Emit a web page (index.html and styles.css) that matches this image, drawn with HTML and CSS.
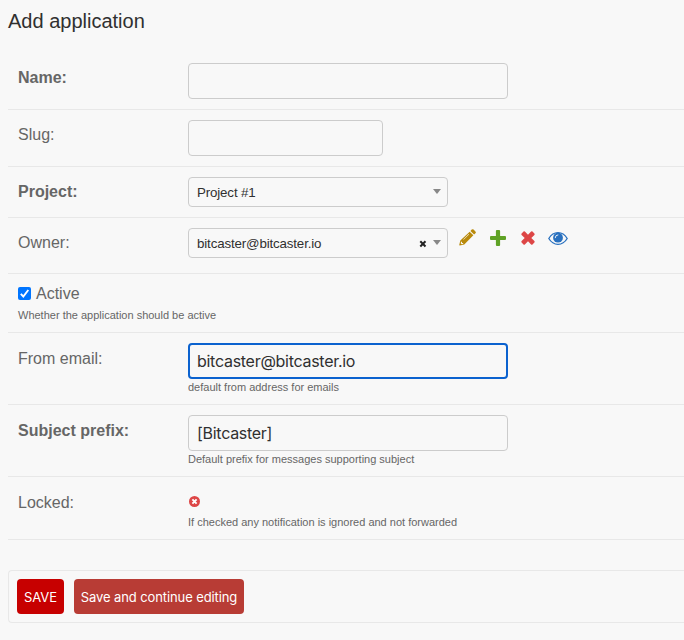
FILE: index.html
```html
<!DOCTYPE html>
<html lang="en">
<head>
<meta charset="utf-8">
<title>Add application</title>
<link rel="stylesheet" href="styles.css">
</head>
<body>
<main class="content">
  <h1 class="title">Add application</h1>
  <form>
    <div class="row">
      <label class="label required">Name:</label>
      <div class="field"><div class="input"></div></div>
    </div>
    <div class="row">
      <label class="label">Slug:</label>
      <div class="field"><div class="input input-short"></div></div>
    </div>
    <div class="row row-project">
      <label class="label required">Project:</label>
      <div class="field"><div class="select"><span class="value value-project">Project #1</span><i class="caret"></i></div></div>
    </div>
    <div class="row row-owner">
      <label class="label">Owner:</label>
      <div class="field related">
        <div class="select"><span class="value value-owner">bitcaster@bitcaster.io</span><svg class="clear" viewBox="0 0 8 8"><path d="M1.3 1.3l5.2 5.2M6.5 1.3L1.3 6.5" stroke="#222" stroke-width="2"/></svg><i class="caret"></i></div>
        <div class="icons">
          <svg class="icon icon-pencil" viewBox="0 0 18 18"><g fill="#b98a0b"><path d="M12.100 2l1.400-1.400q.9-.9 1.900 0l2 2q.9 1 0 1.900L16 5.900z"/><path fill-rule="evenodd" d="M11.300 2.800l3.900 3.900L5.600 16.300.9 17.400q-.7.100-.6-.6l1.100-4.700zM10.200 5.400L4.500 11.100l.4.400 5.700-5.700zM2.200 13.600l-.4 1.500 1.100 1.100 1.500-.4v-1H3.200v-1.200z"/></g></svg>
          <svg class="icon icon-plus" viewBox="0 0 16 16"><path fill="#5fa225" d="M5.900 1q0-1 1-1h2.200q1 0 1 1v4.900H15q1 0 1 1v2.200q0 1-1 1h-4.900V15q0 1-1 1H6.900q-1 0-1-1v-4.900H1q-1 0-1-1V6.900q0-1 1-1h4.900z"/></svg>
          <svg class="icon icon-times" viewBox="0 0 14 14"><path fill="#dd4646" d="M.6 2.500L2.500.6q.7-.6 1.400 0L7 3.700 10.100.6q.7-.6 1.400 0l1.900 1.900q.6.7 0 1.400L10.300 7l3.100 3.100q.6.7 0 1.400l-1.900 1.900q-.7.6-1.400 0L7 10.300l-3.100 3.100q-.7.6-1.400 0L.6 11.500q-.6-.7 0-1.400L3.700 7 .6 3.900q-.6-.7 0-1.400z"/></svg>
          <svg class="icon icon-eye" viewBox="0 0 20 13"><path d="M.8 6.500Q4.300.7 10 .7t9.200 5.800Q15.700 12.300 10 12.300T.8 6.500z" fill="none" stroke="#2870bf" stroke-width="1.300"/><circle cx="10" cy="5.700" r="4.900" fill="#2870bf"/><path d="M7.200 5.700Q7.200 3 9.900 2.900" fill="none" stroke="#f8f8f8" stroke-width=".9" stroke-linecap="round"/></svg>
        </div>
      </div>
    </div>
    <div class="row row-active">
      <div>
        <div class="check-line">
          <svg class="checkbox" viewBox="0 0 13 13"><rect width="13" height="13" rx="2" fill="#0075ff"/><path d="M2.800 6.900l2.500 2.600 5-6.500" fill="none" stroke="#fff" stroke-width="1.900"/></svg>
          <label class="check-label">Active</label>
        </div>
        <p class="help help-active">Whether the application should be active</p>
      </div>
    </div>
    <div class="row row-tall">
      <label class="label">From email:</label>
      <div class="field"><div class="input focused">bitcaster@bitcaster.io</div><p class="help">default from address for emails</p></div>
    </div>
    <div class="row row-tall">
      <label class="label required">Subject prefix:</label>
      <div class="field"><div class="input">[Bitcaster]</div><p class="help">Default prefix for messages supporting subject</p></div>
    </div>
    <div class="row row-locked">
      <label class="label">Locked:</label>
      <div class="field">
        <svg class="no" viewBox="0 0 11 11"><circle cx="5.500" cy="5.500" r="5.500" fill="#dd4646"/><path d="M3.400 3.400l4.200 4.200M7.600 3.400L3.400 7.600" stroke="#fff" stroke-width="1.900"/></svg>
        <p class="help help-locked">If checked any notification is ignored and not forwarded</p>
      </div>
    </div>
    <div class="submit-row">
      <button type="button" class="button save">SAVE</button>
      <button type="button" class="button continue">Save and continue editing</button>
    </div>
  </form>
</main>
</body>
</html>
```
FILE: styles.css
```css
* { box-sizing: border-box; }
body {
  margin: 0;
  height: 640px;
  overflow: hidden;
  background: #f8f8f8;
  color: #666;
  font-family: "Liberation Sans", Arial, sans-serif;
}
.content { padding-left: 8px; }
.title {
  margin: 0;
  height: 53px;
  padding-top: 9px;
  color: #303030;
  font-size: 20px;
  font-weight: 400;
  line-height: 24px;
}
.row {
  display: flex;
  height: 57px;
  padding: 10px 0 0 10px;
  border-bottom: 1px solid #e8e8e8;
}
.row-project { height: 51px; }
.row-owner { height: 56px; }
.row-active { height: 59px; }
.row-tall { height: 72px; }
.row-locked { height: 63px; }
.label {
  width: 170px;
  padding-top: 5px;
  font-size: 16px;
  line-height: 20px;
}
.row-tall .label, .row-locked .label { padding-top: 6px; }
.required { font-weight: 700; }
.input {
  display: flex;
  align-items: center;
  width: 320px;
  height: 36px;
  padding: 0 8px 1px;
  border: 1px solid #ccc;
  border-radius: 4px;
  color: #303030;
  font-family: Inter, sans-serif;
  font-size: 16px;
  letter-spacing: -0.28px;
}
.input-short { width: 195px; }
.focused {
  padding: 0 7px 1px;
  border: 2px solid #0b62cf;
}
.select {
  display: flex;
  align-items: center;
  width: 260px;
  height: 30px;
  padding: 0 6px 0 8px;
  border: 1px solid #ccc;
  border-radius: 4px;
  color: #303030;
  font-size: 13.333px;
  letter-spacing: -0.15px;
}
.value { flex: 1; padding-top: 1px; }
.clear { width: 8px; height: 8px; margin: 1px 6px 0 0; }
.caret {
  margin-top: -2px;
  border: 4px solid transparent;
  border-top: 5px solid #888;
  border-bottom: 0;
}
.related { display: flex; }
.icons { display: flex; margin-left: 11px; }
.icon { display: block; flex: none; }
.icon-pencil { width: 17px; height: 17px; margin-top: 1px; }
.icon-plus { width: 16px; height: 16px; margin: 2px 0 0 14px; }
.icon-times { width: 14px; height: 14px; margin: 3px 0 0 15px; }
.icon-eye { width: 20px; height: 13px; margin: 4px 0 0 13px; }
.help {
  margin: 1px 0 0;
  font-size: 11px;
  line-height: 14px;
}
.check-line { display: flex; align-items: center; height: 20px; }
.checkbox { width: 13px; height: 13px; margin: -1px 5px 0 0; }
.check-label { font-size: 16px; line-height: 20px; }
.help-active { margin-top: 4px; }
.no { display: block; width: 11px; height: 11px; margin: 9px 0 0 1px; }
.help-locked { margin-top: 8px; }
.submit-row {
  display: flex;
  gap: 10px;
  height: 53px;
  margin-top: 30px;
  padding: 8px;
  border: 1px solid #e8e8e8;
  border-right: 0;
  border-radius: 4px 0 0 4px;
}
.button {
  height: 35px;
  padding: 0;
  border: 0;
  border-radius: 4px;
  color: #fff;
  font-family: Inter, sans-serif;
  font-size: 13px;
  letter-spacing: -0.1px;
}
.save { width: 47px; background: #c70000; }
.continue { width: 170px; background: #b83c35; }
```
